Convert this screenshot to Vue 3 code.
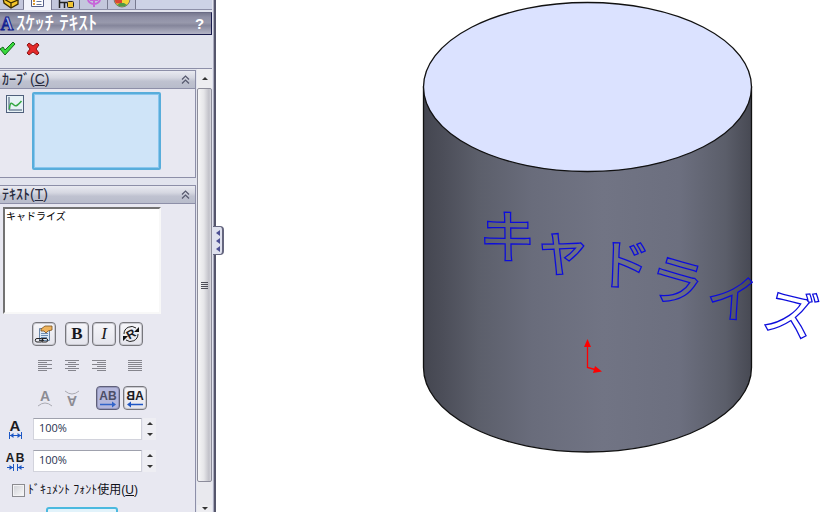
<script setup>
import { ref } from 'vue'

const text = ref('キャドライズ')
const widthFactor = ref('100%')
const spacing = ref('100%')
const useDocFont = ref(false)

const glyphs = [
  { ch: 'キ', x: 508, y: 236, r: 10, size: 57 },
  { ch: 'ャ', x: 562, y: 248, r: 9, size: 57 },
  { ch: 'ド', x: 624, y: 264, r: 2, size: 54 },
  { ch: 'ラ', x: 676, y: 281, r: 16, size: 54 },
  { ch: 'イ', x: 732, y: 298, r: 4, size: 51 },
  { ch: 'ズ', x: 791, y: 313, r: 14, size: 52 },
]
const aligns = [
  { name: '左揃え', cls: '', rows: [[0, 14], [0, 9], [0, 14], [0, 9], [0, 14], [0, 9]] },
  { name: '中央揃え', cls: '', rows: [[0, 14], [3, 8], [0, 14], [3, 8], [0, 14], [3, 8]] },
  { name: '右揃え', cls: '', rows: [[0, 14], [5, 9], [0, 14], [5, 9], [0, 14], [5, 9]] },
  { name: '両端揃え', cls: 'apart', rows: [[0, 14], [0, 14], [0, 14], [0, 14], [0, 14], [0, 14]] },
]
</script>

<template>
  <main class="app">
    <aside class="panel">
      <nav class="tabs">
        <button class="tab" aria-label="フィーチャー">
          <svg width="20" height="9" viewBox="0 0 20 9"><path d="M1-2 9-4 16 0V4L9 8 2 3Z" fill="#f5c62a" stroke="#3a2c00" stroke-width="1.3" /><path d="M9 8V3L16 0M2-1 9 3" fill="none" stroke="#3a2c00" stroke-width="1.3" /></svg>
        </button>
        <button class="tab active" aria-label="プロパティ">
          <svg width="16" height="9" viewBox="0 0 16 9"><path d="M1.500-1V6.500H13.500V-1" fill="#fff" stroke="#55608a" /><path d="M3 0h2v2H3zM3 3h2v2H3z" fill="#d99a35" /><path d="M6.500 1.500h5M6.500 4.500h5" stroke="#66779b" /></svg>
        </button>
        <button class="tab" aria-label="コンフィギュレーション">
          <svg width="18" height="9" viewBox="0 0 18 9"><path d="M2.500-1V8M2 2.500h8M7.500 3v5" fill="none" stroke="#222" stroke-width="1.500" /><rect x="10.500" y="1.500" width="6" height="6" rx="1" fill="#f0c332" stroke="#222" /></svg>
        </button>
        <button class="tab" aria-label="寸法">
          <svg width="16" height="9" viewBox="0 0 16 9"><path d="M8-1V7M2-1A6 5 0 0 0 14-1M4 0h8" fill="none" stroke="#c765d8" stroke-width="2" /></svg>
        </button>
        <button class="tab" aria-label="外観">
          <svg width="18" height="9" viewBox="0 0 18 9"><ellipse cx="9" cy="-1" rx="8" ry="8" fill="#f2d437" stroke="#777" /><path d="M1.500-1H9V3Q4 4 2.500 3Z" fill="#da4535" /><path d="M4 5Q9 8 14 5L11 3H7Z" fill="#4f9b46" /></svg>
        </button>
      </nav>

      <header class="title">
        <svg width="16" height="20" viewBox="0 0 16 20"><text x="7" y="16" class="title-a">A</text></svg>
        <h1>ｽｹｯﾁ ﾃｷｽﾄ</h1>
        <button class="help" aria-label="ヘルプ">?</button>
      </header>

      <div class="actions">
        <button aria-label="OK">
          <svg width="16" height="16" viewBox="0 0 16 16"><path d="M0 8 3 6 5 9 13 1 15 3 5 14Z" fill="#39d93d" stroke="#156a1b" stroke-linejoin="round" /></svg>
        </button>
        <button aria-label="キャンセル">
          <svg width="14" height="14" viewBox="0 0 14 14"><path d="M1 3 3 1 7 4 11 1 13 3 10 7 13 11 11 13 7 10 3 13 1 11 4 7Z" fill="#e52a2a" stroke="#8d1414" stroke-linejoin="round" /></svg>
        </button>
      </div>

      <div class="scroller">
        <div class="groups">
          <section class="group">
            <h2>
              <span>ｶｰﾌﾞ(<u>C</u>)</span>
              <svg width="9" height="9" viewBox="0 0 9 9"><path d="M1 4.500 4.500 1 8 4.500M1 8.500 4.500 5 8 8.500" /></svg>
            </h2>
            <div class="curve">
              <svg width="18" height="18" viewBox="0 0 18 18"><rect x=".5" y=".5" width="17" height="17" fill="#e7f2f6" stroke="#50607c" /><path d="M3 2V15H16" fill="none" stroke="#3f5572" /><path d="M3.500 14C4 6 6 8 8 10S12 10 15.500 6" fill="none" stroke="#36a844" stroke-width="1.500" /></svg>
              <select multiple aria-label="カーブ"></select>
            </div>
          </section>

          <section class="group">
            <h2>
              <label for="sketch-text">ﾃｷｽﾄ(<u>T</u>)</label>
              <svg width="9" height="9" viewBox="0 0 9 9"><path d="M1 4.500 4.500 1 8 4.500M1 8.500 4.500 5 8 8.500" /></svg>
            </h2>
            <div class="text-body">
              <textarea id="sketch-text" v-model="text" spellcheck="false"></textarea>

              <div class="row styles">
                <button class="tool" aria-label="リンク">
                  <svg width="20" height="20" viewBox="0 0 20 20"><path d="M5.500 4.500h10v12h-10z" fill="#dcebf7" stroke="#6a88aa" /><path d="M7 9.500h7M7 11.500h7M7 13.500h6" stroke="#6d8fb4" /><path d="M7 5 11 2H18V6L14 7 12 9 10 7H7Z" fill="#efb45d" stroke="#79511f" stroke-width=".8" /><path d="M3 14.500h4a1.500 1.500 0 0 1 0 3.500H3a1.500 1.500 0 0 1 0-3.500M8 14.500h4a1.500 1.500 0 0 1 0 3.500H8M5 16.300h5" fill="none" stroke="#222" /></svg>
                </button>
                <button class="tool apart bold" aria-label="太字">B</button>
                <button class="tool italic" aria-label="斜体">I</button>
                <button class="tool" aria-label="回転">
                  <svg width="20" height="20" viewBox="0 0 20 20"><path d="M3 10A7.500 7.500 0 0 1 15 4M17 10A7.500 7.500 0 0 1 5 16" fill="none" stroke="#222" /><path d="M18 3V8H13ZM2 17V12H7Z" fill="#111" /><text x="10" y="14" transform="rotate(-30 10 10)" class="ico" font-size="12">R</text></svg>
                </button>
              </div>

              <div class="row aligns">
                <button v-for="a in aligns" :key="a.name" class="flat" :class="a.cls" :aria-label="a.name" disabled>
                  <svg width="14" height="12" viewBox="0 0 14 12"><rect v-for="(r, i) in a.rows" :key="i" :x="r[0]" :y="i * 2" :width="r[1]" height="1" fill="#85858d" /></svg>
                </button>
              </div>

              <div class="row flips">
                <button class="flat" aria-label="垂直に反転" disabled>
                  <svg width="16" height="22" viewBox="0 0 16 22"><text x="8" y="14" class="ico dim" font-size="14">A</text><path d="M1 19Q8 13 15 19" class="arc" /></svg>
                </button>
                <button class="flat" aria-label="垂直に反転 下" disabled>
                  <svg width="16" height="22" viewBox="0 0 16 22"><g transform="rotate(180 8 11)"><text x="8" y="13" class="ico dim" font-size="14">A</text><path d="M1 18Q8 12 15 18" class="arc" /></g></svg>
                </button>
                <button class="tool apart pressed" aria-label="左から右">
                  <svg width="20" height="20" viewBox="0 0 20 20"><text x="10" y="12" class="ico" font-size="12">AB</text><path d="M2 16.500H16" stroke="#3264c9" stroke-width="1.500" /><path d="M14 13.500 18 16.500 14 19.500Z" fill="#3264c9" /></svg>
                </button>
                <button class="tool" aria-label="右から左">
                  <svg width="20" height="20" viewBox="0 0 20 20"><g transform="translate(20 0) scale(-1 1)"><text x="10" y="12" class="ico" font-size="12">AB</text><path d="M2 16.500H16" stroke="#1d55c4" stroke-width="1.500" /><path d="M14 13.500 18 16.500 14 19.500Z" fill="#1d55c4" /></g></svg>
                </button>
              </div>

              <div class="factor">
                <svg width="20" height="22" viewBox="0 0 20 22"><text x="10" y="13" class="ico" font-size="15">A</text><path d="M4.500 14v7M16.500 14v7M5 17.500H16" class="dim-line" /><path d="M5 17.500 8.500 15V20ZM16 17.500 12.500 15V20Z" class="dim-head" /></svg>
                <input v-model="widthFactor" type="text" aria-label="幅係数" />
                <span class="spin"><button aria-label="幅を増やす"><i class="up"></i></button><button aria-label="幅を減らす"><i class="down"></i></button></span>
              </div>
              <div class="factor">
                <svg width="20" height="22" viewBox="0 0 20 22"><text x="5" y="12" class="ico" font-size="12">A</text><text x="15" y="12" class="ico" font-size="12">B</text><path d="M8.500 14v7M12.500 14v7M2 17.500H8M13 17.500H19" class="dim-line" /><path d="M8 17.500 4.500 15V20ZM13 17.500 16.500 15V20Z" class="dim-head" /></svg>
                <input v-model="spacing" type="text" aria-label="間隔" />
                <span class="spin"><button aria-label="間隔を増やす"><i class="up"></i></button><button aria-label="間隔を減らす"><i class="down"></i></button></span>
              </div>

              <label class="check">
                <input v-model="useDocFont" type="checkbox" />
                <span>ﾄﾞｷｭﾒﾝﾄ ﾌｫﾝﾄ使用(<u>U</u>)</span>
              </label>
              <button class="font-button" aria-label="フォント"></button>
            </div>
          </section>
        </div>

        <div class="scrollbar">
          <button class="step" aria-label="上へ"><i class="up"></i></button>
          <div class="thumb"><i></i><i></i><i></i><i></i></div>
          <button class="step last" aria-label="下へ"><i class="down"></i></button>
        </div>
      </div>

      <button class="handle" aria-label="パネルを閉じる"><i></i><i></i><i></i></button>
    </aside>

    <section class="view">
      <svg class="model" viewBox="216 0 622 512" preserveAspectRatio="xMinYMin meet">
        <defs>
          <linearGradient id="side">
            <stop offset="0" stop-color="#444650" />
            <stop offset=".06" stop-color="#4c4e59" />
            <stop offset=".17" stop-color="#5c5f6b" />
            <stop offset=".33" stop-color="#696c7b" />
            <stop offset=".55" stop-color="#717484" />
            <stop offset=".78" stop-color="#6c6f7f" />
            <stop offset=".92" stop-color="#5b5e6a" />
            <stop offset="1" stop-color="#474953" />
          </linearGradient>
        </defs>
        <path d="M423.500 87V367.500A164 84.500 0 0 0 751.500 367.500V87Z" fill="url(#side)" stroke="#111" stroke-width="1.300" />
        <ellipse cx="587.500" cy="87" rx="164" ry="84.500" fill="#dbe2ff" stroke="#111" stroke-width="1.300" />
        <g class="sketch">
          <text v-for="g in glyphs" :key="g.ch" :x="g.x" :y="g.y + g.size * 0.38" :font-size="g.size" :transform="`rotate(${g.r} ${g.x} ${g.y})`">{{ g.ch }}</text>
        </g>
        <path d="M587.500 346V367.500L595 369.500" fill="none" stroke="#f00" stroke-width="1.300" />
        <path d="M587.500 339 591 347H584ZM602 371.500 593 373 595 366Z" fill="#f00" />
      </svg>
    </section>
  </main>
</template>

<style>
body {
  overflow: hidden;
  background: #fff;
}
</style>

<style scoped>
* {
  box-sizing: border-box;
}
.app {
  display: flex;
  height: 100vh;
  font-family: "Liberation Sans", "Noto Sans CJK JP", sans-serif;
}
button {
  padding: 0;
  border: 0;
  background: none;
  color: inherit;
  font: inherit;
}
svg {
  display: block;
  flex: none;
}
.panel {
  position: relative;
  display: flex;
  flex-direction: column;
  flex: none;
  width: 216px;
  background: #e2e4ee;
  border-right: 2px solid #55566c;
  box-shadow: inset -1px 0 #a9aabd;
}
.tabs {
  display: flex;
  flex: none;
  height: 10px;
  margin-right: 2px;
  background: #cdd2e6;
  border-bottom: 1px solid #8d8fa8;
}
.tab {
  display: flex;
  justify-content: center;
  width: 28px;
  height: 9px;
  overflow: hidden;
  background: #c3c7dc;
  border-right: 1px solid #77798f;
}
.tab:first-child {
  width: 24px;
}
.tab.active {
  height: 10px;
  background: #f1f3fa;
}
.title {
  display: flex;
  align-items: center;
  flex: none;
  height: 23px;
  margin: 2px 2px 0 0;
  background: linear-gradient(#77788f, #8e8fa5 20%, #9899ac 45%, #85869b 60%, #b4b5c6);
  border: solid #191b4d;
  border-width: 1px 1px 1px 0;
  border-top-color: #6a6b85;
  color: #fff;
}
.title svg,
.flat svg,
.factor svg {
  overflow: visible;
}
.title-a {
  font: bold 18px "Liberation Serif", serif;
  text-anchor: middle;
  fill: #a9b5ee;
  stroke: #10208c;
  stroke-width: 1px;
}
h1 {
  flex: 1;
  margin: 0;
  font-size: 19px;
  line-height: 20px;
  font-weight: 500;
}
.help {
  width: 23px;
  font-size: 15px;
  font-weight: 700;
}
.actions {
  display: flex;
  align-items: center;
  flex: none;
  gap: 10px;
  height: 34px;
  padding-bottom: 6px;
  margin-right: 2px;
  border-bottom: 1px solid #8d8fa8;
}
.scroller {
  display: flex;
  flex: 1;
  min-height: 0;
  margin-right: 2px;
}
.groups {
  flex: 1;
  min-width: 0;
  padding: 1px 1px 0 0;
  overflow: hidden;
}
.group {
  margin-bottom: 7px;
  background: #e8e8f1;
  border: solid #8d8fa8;
  border-width: 1px 1px 1px 0;
}
h2 {
  display: flex;
  align-items: center;
  justify-content: space-between;
  height: 18px;
  margin: 0;
  padding: 0 5px 0 2px;
  background: linear-gradient(#e9eaf1, #d5d7e1 40%, #bfc2d0 60%, #b8bccb);
  border-bottom: 1px solid #8d8fa8;
  color: #272a3e;
  font-size: 14px;
  line-height: 16px;
  font-weight: 500;
}
h2 > :first-child {
  padding-bottom: 2px;
}
h2 path {
  fill: none;
  stroke: #55586d;
  stroke-width: 1.2px;
}
.curve {
  display: flex;
  gap: 8px;
  padding: 3px 34px 7px 6px;
}
.curve svg {
  margin-top: 3px;
}
.curve select {
  flex: 1;
  min-width: 0;
  height: 78px;
  appearance: none;
  background: #cfe4f8;
  border: 2px solid #58addb;
  box-shadow: inset 0 0 0 1px #8ac6ee;
  outline: 0;
}
.text-body {
  padding: 3px 0 0 3px;
}
textarea {
  display: block;
  width: 158px;
  height: 107px;
  padding: 1px;
  border: 2px solid;
  border-color: #727272 #f8f8f8 #f8f8f8 #727272;
  background: #fff;
  color: #000;
  font: 10px/12px "Noto Sans CJK JP", sans-serif;
  resize: none;
  outline: 0;
}
.row {
  display: flex;
  align-items: center;
  gap: 3px;
  height: 24px;
  margin: 8px 0 0 30px;
}
.styles {
  margin-left: 29px;
}
.tool,
.flat {
  display: flex;
  align-items: center;
  justify-content: center;
  width: 24px;
  height: 24px;
}
.tool {
  border: 1px solid #77777d;
  border-radius: 4px;
  background: linear-gradient(#f6f6fa, #e4e4ec);
  box-shadow: inset 0 0 0 1px #c9c9d0;
  color: #181820;
}
.pressed {
  background: #b4b7dc;
  border-color: #5f6079;
  box-shadow: inset 0 0 0 1px #9698bd;
}
.apart {
  margin-left: 9px;
}
.styles .apart {
  margin-left: 6px;
}
.bold {
  font: bold 17px "Liberation Serif", serif;
}
.italic {
  font: italic 17px "Liberation Serif", serif;
}
.ico {
  font-family: "Liberation Sans", sans-serif;
  font-weight: 700;
  text-anchor: middle;
  fill: #1b1b22;
}
.pressed .ico {
  fill: #4c4e66;
}
.dim {
  fill: #8c8c94;
}
.arc {
  fill: none;
  stroke: #aaaab2;
}
.dim-line {
  fill: none;
  stroke: #1c57c5;
}
.dim-head {
  fill: #1c57c5;
}
.factor {
  display: flex;
  gap: 8px;
  height: 22px;
  margin: 8px 0 10px 2px;
}
.factor + .factor {
  margin-top: 0;
}
.factor input {
  width: 109px;
  height: 22px;
  padding: 0 5px 3px;
  border: 1px solid #d2d3dc;
  border-top-color: #9fa1ad;
  background: #fff;
  color: #27324f;
  font: 11px/16px "Open Sans", sans-serif;
  outline: 0;
}
.spin {
  display: flex;
  flex-direction: column;
  width: 13px;
  margin-left: -7px;
}
.spin button {
  display: grid;
  place-items: center;
  height: 11px;
  background: #eeeef3;
}
.up,
.down {
  border: solid transparent;
  border-width: 0 3px;
}
.up {
  border-bottom: 3px solid #333;
}
.down {
  border-top: 3px solid #333;
}
.check {
  display: flex;
  align-items: center;
  gap: 3px;
  height: 16px;
  margin-left: 9px;
  color: #101018;
  font-size: 12px;
  line-height: 16px;
  white-space: nowrap;
}
.check input {
  width: 13px;
  height: 13px;
  margin: 0;
  appearance: none;
  border: 1px solid #8b8b90;
  background: linear-gradient(135deg, #cfd0d6, #fafafa);
  box-shadow: inset 0 0 0 1px #f3f3f5;
}
.font-button {
  display: block;
  width: 72px;
  height: 22px;
  margin: 9px 0 0 43px;
  border: 2px solid #4bb9df;
  border-radius: 3px;
  background: #e2f3fb;
}
.scrollbar {
  display: flex;
  flex-direction: column;
  width: 15px;
  background: #e9e9ee;
}
.step {
  display: grid;
  place-items: center;
  flex: none;
  height: 19px;
  background: #ededf1;
}
.step.last {
  height: 7px;
}
.thumb {
  display: flex;
  flex-direction: column;
  align-items: center;
  justify-content: center;
  flex: 1;
  gap: 1px;
  margin-bottom: 23px;
  background: linear-gradient(90deg, #f5f5f6, #e6e6e9 45%, #c0c0c8 85%, #dcdce2);
  border: 1px solid #8c8c9a;
  border-radius: 2px;
}
.thumb i {
  width: 7px;
  height: 1px;
  background: #4e4e58;
}
.handle {
  position: absolute;
  top: 226px;
  right: -10px;
  display: flex;
  flex-direction: column;
  align-items: center;
  justify-content: center;
  gap: 2px;
  width: 11px;
  height: 29px;
  background: #dfe1ee;
  border: solid #65667f;
  border-width: 1px 2px 1px 0;
  border-radius: 0 4px 4px 0;
}
.handle i {
  border: solid transparent;
  border-width: 3px 0;
  border-right: 4px solid #4c4f93;
}
.view {
  flex: 1;
  min-width: 0;
  overflow: hidden;
  background: #fff;
}
.model {
  width: 100%;
  height: auto;
}
.sketch text {
  font-family: "Noto Sans CJK JP", sans-serif;
  font-weight: 500;
  text-anchor: middle;
  fill: none;
  stroke: #0c0cdc;
  stroke-width: 1.3px;
}
</style>
